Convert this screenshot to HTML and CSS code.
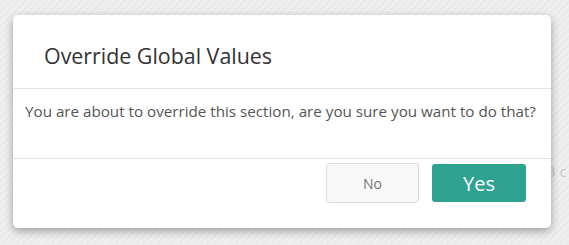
FILE: index.html
```html
<!DOCTYPE html>
<html lang="en">
<head>
    <meta charset="UTF-8">
    <meta name="viewport" content="width=device-width, initial-scale=1.0">
    <title>Override Global Values</title>
    <link rel="stylesheet" href="styles.css">
</head>
<body>
    <div class="page-behind">
        <span class="behind-text">3 c</span>
    </div>
    <div class="modal">
        <div class="modal-header">
            <h2 class="modal-title">Override Global Values</h2>
        </div>
        <div class="modal-body">
            <p>You are about to override this section, are you sure you want to do that?</p>
        </div>
        <div class="modal-footer">
            <button class="btn btn-no">No</button>
            <button class="btn btn-yes">Yes</button>
        </div>
    </div>
</body>
</html>
```

FILE: styles.css
```css
body {
    font-family: "Open Sans", Lato, sans-serif;
    margin: 0;
    padding: 15px 18px 0 13px;
    height: 245px;
    box-sizing: border-box;
    overflow: hidden;
    position: relative;
    background: #ebebeb repeating-linear-gradient(135deg, rgba(255, 255, 255, 0.25) 0 2px, rgba(0, 0, 0, 0) 2px 5px);
}
.page-behind {
    position: absolute;
    top: 0;
    left: 0;
    right: 0;
    bottom: 0;
}
.behind-text {
    position: absolute;
    left: 547px;
    top: 161px;
    font-size: 15px;
    white-space: nowrap;
    color: #c4c8cc;
}
.modal {
    position: relative;
    width: 538px;
    height: 213px;
    background-color: #fff;
    border-radius: 5px;
    box-shadow: 0 3px 9px rgba(0, 0, 0, 0.35);
    display: flex;
    flex-direction: column;
}
.modal-header {
    height: 74px;
    padding: 0 31px;
    border-bottom: 1px solid #e5e5e5;
    display: flex;
    align-items: center;
    box-sizing: border-box;
}
.modal-title {
    margin: 7px 0 0;
    font-size: 21.4px;
    font-weight: normal;
    color: #333;
}
.modal-body {
    height: 70px;
    padding: 0 12px;
    border-bottom: 1px solid #e5e5e5;
    box-sizing: border-box;
}
.modal-body p {
    margin: 12px 0 0;
    font-size: 15.2px;
    color: #555;
}
.modal-footer {
    display: flex;
    justify-content: flex-end;
    align-items: flex-start;
    gap: 13px;
    padding: 4px 25px 0 0;
}
.btn {
    font-family: inherit;
    border-radius: 3px;
    cursor: pointer;
}
.btn-no {
    width: 93px;
    height: 40px;
    background-color: #f8f8f8;
    border: 1px solid #dcdcdc;
    color: #777;
    font-size: 14px;
}
.btn-yes {
    width: 94px;
    height: 38px;
    margin-top: 1px;
    background-color: #2ea392;
    border: none;
    color: #fff;
    font-size: 20px;
}
```
